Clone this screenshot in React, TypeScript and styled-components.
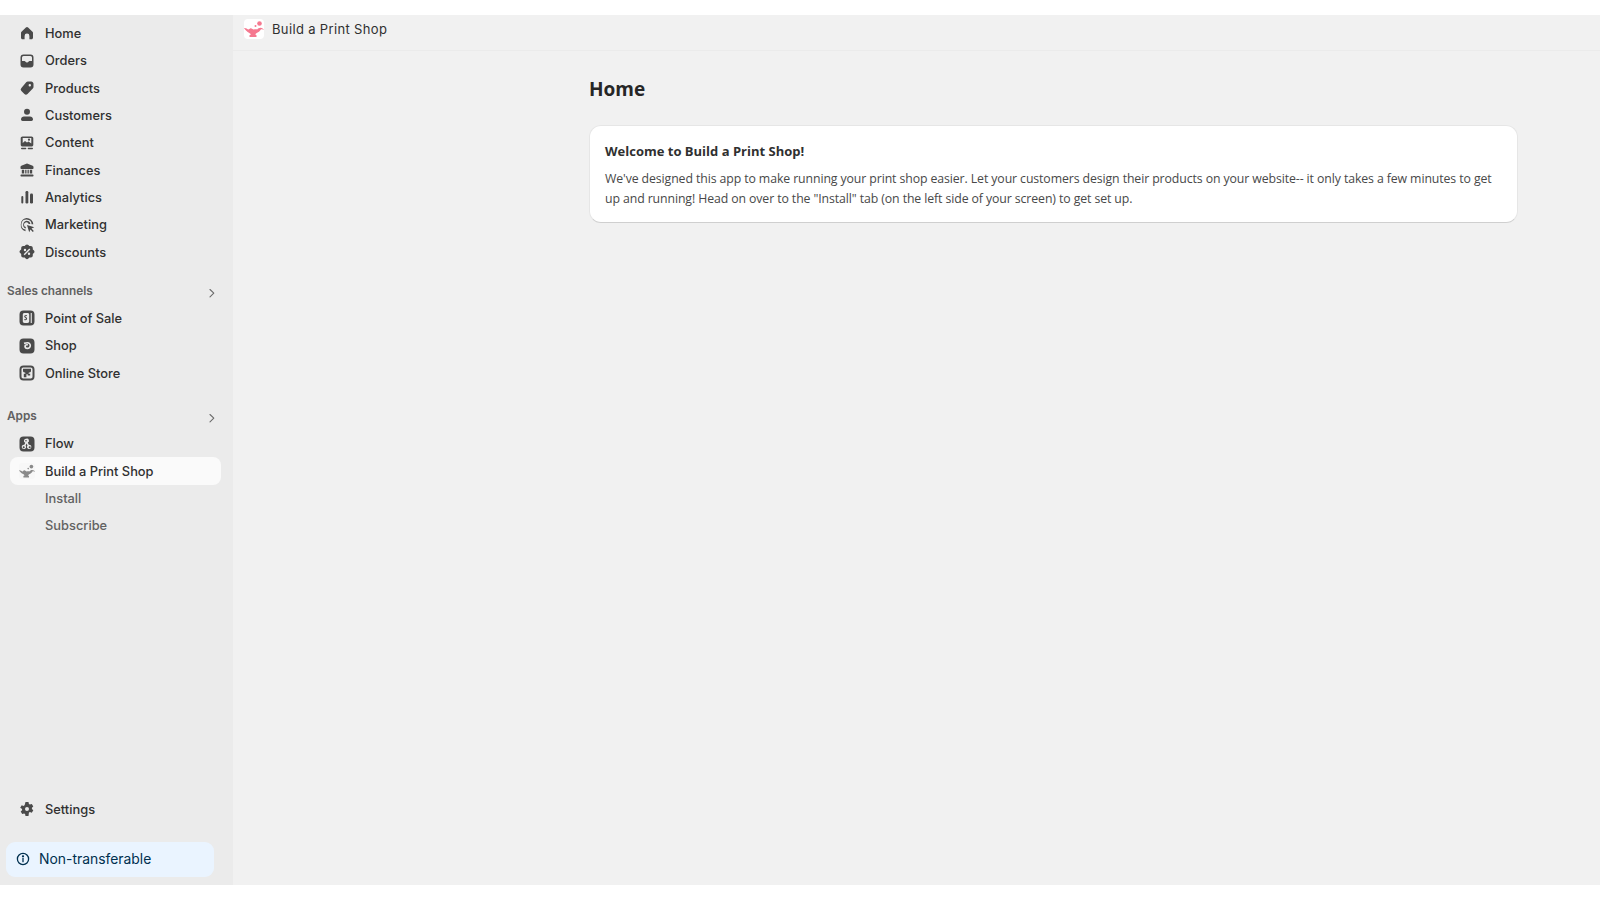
import React from "react";
import styled, { createGlobalStyle } from "styled-components";

const GlobalStyle = createGlobalStyle`
  html, body { margin: 0; padding: 0; background: #fff; }
  body { font-family: "Inter", "Liberation Sans", sans-serif; }
`;

const ICON = "#4a4a4a";

function Svg({ children, size = 16 }: { children: React.ReactNode; size?: number }) {
  return (
    <svg width={size} height={size} viewBox="0 0 16 16" fill={ICON}>
      {children}
    </svg>
  );
}

const HomeIcon = () => (
  <Svg><path d="M2.500 6.700 6.900 2.400a1.600 1.600 0 0 1 2.200 0l4.400 4.300c.3.300.5.700.5 1.100v5c0 .8-.7 1.500-1.500 1.500h-2.100v-3.400a2.400 2.400 0 0 0-4.800 0v3.400H3.500c-.8 0-1.500-.7-1.500-1.500v-5c0-.4.200-.8.500-1.100Z" /></Svg>
);
const OrdersIcon = () => (
  <Svg><path fillRule="evenodd" d="M4.500 1.500h7a3 3 0 0 1 3 3v7a3 3 0 0 1-3 3h-7a3 3 0 0 1-3-3v-7a3 3 0 0 1 3-3Zm0 1.500A1.500 1.500 0 0 0 3 4.500V8h2.500c.5 0 .8.300 1 .7.200.5.800.8 1.500.8s1.300-.3 1.500-.8c.2-.4.500-.7 1-.7H13V4.500A1.500 1.500 0 0 0 11.500 3h-7Z" /></Svg>
);
const ProductsIcon = () => (
  <Svg><path fillRule="evenodd" d="M8.800 1.500h3.400c1.200 0 2.300 1 2.300 2.300V7c0 .6-.2 1.200-.7 1.600l-5.300 5.400a2.200 2.200 0 0 1-3.100 0l-3-3a2.200 2.200 0 0 1 0-3.100L7.200 2.200c.4-.4 1-.7 1.600-.7Zm2 2.500a1.200 1.200 0 1 0 0 2.400 1.200 1.200 0 0 0 0-2.400Z" /></Svg>
);
const CustomersIcon = () => (
  <Svg><circle cx="8" cy="4.700" r="3" /><path d="M2 12.300c0-1.500 1.400-2.800 3-2.800h6c1.600 0 3 1.300 3 2.800 0 .9-.7 1.700-1.600 1.700H3.600c-.9 0-1.600-.8-1.600-1.700Z" /></Svg>
);
const ContentIcon = () => (
  <Svg>
    <path fillRule="evenodd" d="M3.500 1.500h9c1 0 1.800.8 1.800 1.800v6.400c0 1-.8 1.800-1.800 1.800h-9c-1 0-1.800-.8-1.800-1.800V3.300c0-1 .8-1.800 1.800-1.800Zm.2 1.500v5l2.300-2 2 1.600 1.500-1 2.800 2V3H3.700Z" />
    <circle cx="10" cy="4.700" r="1.100" />
    <rect x="2" y="12.800" width="5.300" height="1.400" rx=".7" />
    <rect x="8.700" y="12.800" width="5.300" height="1.400" rx=".7" />
  </Svg>
);
const FinancesIcon = () => (
  <Svg><path fillRule="evenodd" d="M7.300 1.700a2 2 0 0 1 1.400 0l5 2c.5.200.8.700.8 1.200v1.400c0 .4-.3.700-.7.700H2.200a.7.700 0 0 1-.7-.7V4.900c0-.5.300-1 .8-1.200l5-2ZM2.800 7.800h2.400v3.700H2.800V7.800Zm3.400 0h1.300v3.700H6.200V7.800Zm2.300 0h1.300v3.700H8.500V7.800Zm2.300 0h2.400v3.700h-2.400V7.800ZM2.200 12.500h11.600c.4 0 .7.300.7.700v.6c0 .4-.3.700-.7.700H2.200a.7.700 0 0 1-.7-.7v-.6c0-.4.300-.7.700-.7Z" /></Svg>
);
const AnalyticsIcon = () => (
  <Svg>
    <rect x="2.300" y="7" width="2" height="7.500" rx="1" />
    <rect x="6.500" y="2" width="2.800" height="12.500" rx="1.200" />
    <rect x="11" y="4.500" width="3" height="10" rx="1.200" />
  </Svg>
);
const MarketingIcon = () => (
  <Svg>
    <path d="M7.500 1a6.800 6.800 0 0 1 6.800 6.300h-1.700A5.100 5.100 0 1 0 6.500 12.500v1.700A6.800 6.800 0 0 1 7.500 1Z" />
    <path d="M7.500 3.800a4 4 0 0 1 3.900 3.200H9.700a2.400 2.400 0 1 0-2.900 2.900v1.600A4 4 0 0 1 7.500 3.800Z" />
    <path d="m8 8 7.300 2.300-2.800 1.300 2.300 2.300-1 1-2.300-2.300L10.200 15.300 8 8Z" />
  </Svg>
);
const DiscountsIcon = () => (
  <Svg>
    <path fillRule="evenodd" d="M6.600 1.100a2 2 0 0 1 2.800 0l.9.900h1.600c1 0 1.900.9 1.900 2v1.400l1 .9a2 2 0 0 1 0 2.800l-1 1V11.500c0 1.100-.9 2-1.900 2h-1.500l-1 1a2 2 0 0 1-2.800 0l-.9-1H4.100c-1 0-1.900-.9-1.900-2v-1.400l-1-1a2 2 0 0 1 0-2.800l1-.9V4c0-1.100.9-2 1.900-2h1.600l.9-.9ZM6 4.800a1.200 1.200 0 1 0 0 2.400 1.200 1.200 0 0 0 0-2.400Zm4 3.700a1.200 1.200 0 1 0 0 2.400 1.200 1.200 0 0 0 0-2.400Zm.3-3.900L4.700 10.200l1 1 5.600-5.600-1-1Z" />
  </Svg>
);
const PosIcon = () => (
  <Svg>
    <path fillRule="evenodd" d="M4.500.5h7a4 4 0 0 1 4 4v7a4 4 0 0 1-4 4h-7a4 4 0 0 1-4-4v-7a4 4 0 0 1 4-4Zm1 2.500c-1 0-1.700.7-1.700 1.700v6.600c0 1 .7 1.700 1.700 1.700h3c1 0 1.700-.7 1.700-1.700V4.700C10.200 3.700 9.500 3 8.500 3h-3Zm6.200 0v10h1.100V3h-1.100Z" />
    <path d="M7.100 5c-1.300 0-1.900.8-1.900 1.500 0 1.400 1.800 1.200 1.800 2.200 0 .5-.7.600-1.600.2l-.2 1c1.500.6 2.900.1 2.900-1.300 0-1.400-1.700-1.300-1.700-2.100 0-.5.500-.6 1.300-.3l.2-.9C7.700 5.100 7.400 5 7.100 5Z" />
  </Svg>
);
const ShopIcon = () => (
  <Svg><path fillRule="evenodd" d="M4.500.5h7a4 4 0 0 1 4 4v7a4 4 0 0 1-4 4h-7a4 4 0 0 1-4-4v-7a4 4 0 0 1 4-4Zm4 3.400c-1.100 0-2.300.2-3.700.7l.5 1.600c1.200-.4 2.200-.6 3.100-.6 1.300 0 2.100.8 2.100 1.900 0 1.200-.9 2.100-2.100 2.100-.8 0-1.400-.4-1.400-1.100 0-.6.400-1 1-1 .3 0 .5.100.7.200l.4-1.400a3 3 0 0 0-1.200-.3c-1.700 0-2.700 1.100-2.700 2.600 0 1.600 1.300 2.700 3.100 2.700 2.200 0 3.800-1.600 3.800-3.700 0-2.200-1.600-3.700-3.600-3.700Z" /></Svg>
);
const StoreIcon = () => (
  <Svg>
    <path fillRule="evenodd" d="M4.500.5h7a4 4 0 0 1 4 4v7a4 4 0 0 1-4 4h-7a4 4 0 0 1-4-4v-7a4 4 0 0 1 4-4Zm-.300 2A1.700 1.700 0 0 0 2.500 4.200v7.600c0 .9.800 1.700 1.700 1.700h7.600c.9 0 1.700-.8 1.700-1.700V4.200c0-.9-.8-1.700-1.700-1.700H4.200Z" />
    <path d="M4 3.800h8v2.500a1.300 1.300 0 0 1-2 .9 2 2 0 0 1-4 0 1.300 1.300 0 0 1-2-.9V3.800Zm.8 5h2.600v3.400H4.800V8.800Zm3.900 0h2.500v1.800H8.700V8.800Z" />
  </Svg>
);
const FlowIcon = () => (
  <Svg>
    <path fillRule="evenodd" d="M4.500.5h7a4 4 0 0 1 4 4v7a4 4 0 0 1-4 4h-7a4 4 0 0 1-4-4v-7a4 4 0 0 1 4-4ZM7 2.800a2 2 0 0 0-.7 3.900l-1 2a2.200 2.200 0 1 0 1.300.7l1-2 .9 2a2.200 2.200 0 1 0 1.300-.7l-1-2.100A2 2 0 0 0 7 2.800Zm0 1.200a.8.800 0 1 1 0 1.600.8.800 0 0 1 0-1.600ZM4.700 10.300a1 1 0 1 1 0 2 1 1 0 0 1 0-2Zm6 0a1 1 0 1 1 0 2 1 1 0 0 1 0-2Z" />
  </Svg>
);
const SettingsIcon = () => (
  <Svg><path fillRule="evenodd" d="M6.500 1h3l.4 1.900c.4.200.7.300 1 .6l1.900-.6 1.500 2.500-1.400 1.300c.100.400.100.800 0 1.200l1.400 1.300-1.500 2.500-1.900-.6c-.3.300-.6.400-1 .6L9.500 15h-3l-.4-1.900c-.4-.2-.7-.3-1-.6l-1.900.6-1.500-2.500 1.400-1.300a3 3 0 0 1 0-1.200L1.200 6.800 2.700 4.300l1.900.6c.3-.3.6-.4 1-.6L6.500 1ZM8 6a2 2 0 1 0 0 4 2 2 0 0 0 0-4Z" /></Svg>
);
const InfoIcon = () => (
  <svg width="14" height="14" viewBox="0 0 14 14" fill="none" stroke="#00304f" strokeWidth="1.300">
    <circle cx="7" cy="7" r="5.600" />
    <path d="M7 6.500v3.200" strokeLinecap="round" />
    <circle cx="7" cy="4.300" r=".5" fill="#00304f" />
  </svg>
);
const Chevron = () => (
  <svg width="10" height="10" viewBox="0 0 10 10" fill="none" stroke="#6b6b6b" strokeWidth="1.100">
    <path d="m3 1.500 3.800 3.700L3 8.800" strokeLinecap="round" strokeLinejoin="round" />
  </svg>
);
function LampLogo({ color, size }: { color: string; size: number }) {
  return (
    <svg width={size} height={size} viewBox="0 0 20 20" fill={color}>
      <circle cx="15.500" cy="4.500" r="2.300" />
      <circle cx="11.500" cy="7" r="1" />
      <path d="M0 9c1.800-.3 3 1 4.800 1.600.4-.8 1.600-1.400 2.200-1.400l2.500 1.300c1.300 0 2.600-.3 3.700 0 .7-.9 1.800-1.700 3.300-1.700 1.500 0 3 1 3.500 2.300-.8-.8-1.800-1.100-3-.8-.8 1.500-2.300 3-4.300 3.700l-1.500 1.200 1.300 1.100V18H5.500v-1.700l1.500-1.100-1.700-1.300C3 13 1.300 11 0 9Z" />
    </svg>
  );
}

const Page = styled.div`
  width: 1600px;
  height: 900px;
  padding: 15px 0;
  box-sizing: border-box;
  display: flex;
  overflow: hidden;
`;

const Sidebar = styled.nav`
  width: 233px;
  flex-shrink: 0;
  background: #ebebeb;
  padding-top: 4.7px;
  padding-bottom: 8px;
  box-sizing: border-box;
  display: flex;
  flex-direction: column;
`;

const Group = styled.div<{ $gap?: number }>`
  margin-top: ${(p) => p.$gap ?? 0}px;
`;

const SectionHead = styled.div`
  height: 27.3px;
  display: flex;
  align-items: center;
  justify-content: space-between;
  padding: 0 16px 0 7px;
  font-size: 11.8px;
  font-weight: 600;
  color: #616161;
`;

const ChevronWrap = styled.span`
  display: flex;
  margin-top: 3px;
`;

const Row = styled.div<{ $active?: boolean; $sub?: boolean }>`
  height: 27.35px;
  margin: 0 12px 0 10px;
  padding-left: 35px;
  position: relative;
  display: flex;
  align-items: center;
  box-sizing: border-box;
  border-radius: 8px;
  font-size: 12.85px;
  font-weight: ${(p) => (p.$active ? 550 : 450)};
  color: ${(p) => (p.$sub ? "#616161" : "#303030")};
  background: ${(p) => (p.$active ? "#fafafa" : "transparent")};
`;

const RowIcon = styled.span`
  position: absolute;
  left: 9px;
  top: 50%;
  transform: translateY(-50%);
  display: flex;
`;

const Spacer = styled.div`
  flex: 1;
`;

const Banner = styled.div`
  margin: 19px 0 0 6px;
  width: 208px;
  height: 35px;
  box-sizing: border-box;
  padding: 0 0 1px 10px;
  display: flex;
  align-items: center;
  gap: 9px;
  border-radius: 9px;
  background: #eaf4ff;
  color: #00304f;
  font-size: 13.9px;
  font-weight: 400;
`;

const Main = styled.main`
  flex: 1;
  background: #f1f1f1;
  display: flex;
  flex-direction: column;
`;

const TopBar = styled.header`
  height: 36px;
  flex-shrink: 0;
  box-sizing: border-box;
  border-bottom: 1px solid #ebebeb;
  padding: 0 0 8px 11px;
  display: flex;
  align-items: center;
  gap: 8px;
  font-size: 13px;
  letter-spacing: 0.35px;
  color: #303030;
`;

const LogoTile = styled.span`
  width: 20px;
  height: 20px;
  background: #fff;
  border-radius: 4px;
  display: flex;
`;

const SmallTile = styled.span`
  width: 16px;
  height: 16px;
  background: #f7f7f7;
  border-radius: 3px;
  display: flex;
`;

const Content = styled.div`
  padding: 26px 82px 0 356px;
  font-family: "Open Sans", "Noto Sans", sans-serif;
`;

const Heading = styled.h1`
  margin: 0;
  height: 24px;
  line-height: 24px;
  font-size: 19px;
  font-weight: 700;
  color: #262626;
`;

const Card = styled.section`
  margin-top: 24px;
  height: 98px;
  box-sizing: border-box;
  padding: 15px 15px;
  background: #fff;
  border: 1px solid #e6e6e6;
  border-bottom-color: #cfcfcf;
  border-radius: 12px;
`;

const CardTitle = styled.h2`
  margin: 0 0 8px;
  line-height: 20px;
  font-size: 13px;
  font-weight: 700;
  color: #303030;
`;

const CardText = styled.p`
  margin: 0;
  line-height: 20.4px;
  font-size: 12.3px;
  letter-spacing: -0.1px;
  color: #484848;
`;

const primary: [string, React.ReactNode][] = [
  ["Home", <HomeIcon />],
  ["Orders", <OrdersIcon />],
  ["Products", <ProductsIcon />],
  ["Customers", <CustomersIcon />],
  ["Content", <ContentIcon />],
  ["Finances", <FinancesIcon />],
  ["Analytics", <AnalyticsIcon />],
  ["Marketing", <MarketingIcon />],
  ["Discounts", <DiscountsIcon />],
];

const channels: [string, React.ReactNode][] = [
  ["Point of Sale", <PosIcon />],
  ["Shop", <ShopIcon />],
  ["Online Store", <StoreIcon />],
];

function NavRow({ label, icon }: { label: string; icon: React.ReactNode }) {
  return (
    <Row>
      <RowIcon>{icon}</RowIcon>
      {label}
    </Row>
  );
}

export default function App(): React.ReactElement {
  return (
    <>
      <GlobalStyle />
      <Page>
        <Sidebar>
          <Group>
            {primary.map(([label, icon]) => (
              <NavRow key={label} label={label} icon={icon} />
            ))}
          </Group>
          <Group $gap={11.7}>
            <SectionHead>
              Sales channels
              <ChevronWrap><Chevron /></ChevronWrap>
            </SectionHead>
            {channels.map(([label, icon]) => (
              <NavRow key={label} label={label} icon={icon} />
            ))}
          </Group>
          <Group $gap={15.9}>
            <SectionHead>
              Apps
              <ChevronWrap><Chevron /></ChevronWrap>
            </SectionHead>
            <NavRow label="Flow" icon={<FlowIcon />} />
            <Row $active>
              <RowIcon>
                <SmallTile><LampLogo color="#8a8a8a" size={16} /></SmallTile>
              </RowIcon>
              Build a Print Shop
            </Row>
            <Row $sub>Install</Row>
            <Row $sub>Subscribe</Row>
          </Group>
          <Spacer />
          <NavRow label="Settings" icon={<SettingsIcon />} />
          <Banner>
            <InfoIcon />
            Non-transferable
          </Banner>
        </Sidebar>
        <Main>
          <TopBar>
            <LogoTile><LampLogo color="#f5788f" size={20} /></LogoTile>
            Build a Print Shop
          </TopBar>
          <Content>
            <Heading>Home</Heading>
            <Card>
              <CardTitle>Welcome to Build a Print Shop!</CardTitle>
              <CardText>
                We've designed this app to make running your print shop easier. Let your customers design their products on your website-- it only takes a few minutes to get up and running! Head on over to the "Install" tab (on the left side of your screen) to get set up.
              </CardText>
            </Card>
          </Content>
        </Main>
      </Page>
    </>
  );
}
